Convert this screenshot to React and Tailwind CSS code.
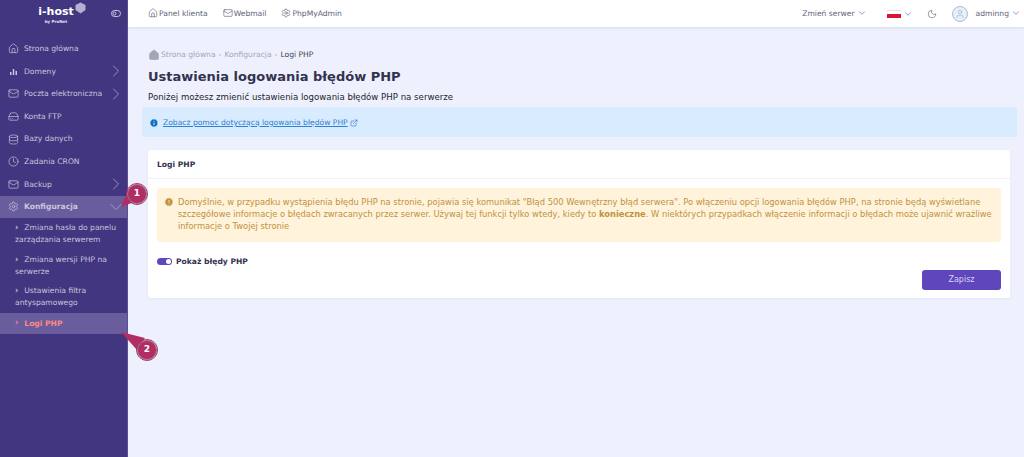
import React from 'react'
import { Home, Mail, HardDrive, Database, Clock, Settings, ChevronRight, ChevronDown, Moon, User, ExternalLink, Info, AlertCircle } from 'lucide-react'

const Bars = ({ className }) => (
  <svg width="11" height="11" viewBox="0 0 11 11" fill="currentColor" className={className}>
    <rect x="2" y="6" width="1.500" height="3" />
    <rect x="4.750" y="3" width="1.500" height="6" />
    <rect x="7.500" y="5" width="1.500" height="4" />
  </svg>
)

const menu = [
  { label: 'Strona główna', icon: Home },
  { label: 'Domeny', icon: Bars, arrow: true },
  { label: 'Poczta elektroniczna', icon: Mail, arrow: true },
  { label: 'Konta FTP', icon: HardDrive },
  { label: 'Bazy danych', icon: Database },
  { label: 'Zadania CRON', icon: Clock },
  { label: 'Backup', icon: Mail, arrow: true },
]

const subMenu = [
  { first: 'Zmiana hasła do panelu', second: 'zarządzania serwerem' },
  { first: 'Zmiana wersji PHP na', second: 'serwerze' },
  { first: 'Ustawienia filtra', second: 'antyspamowego' },
]

const Marker = ({ number, className, arrow }) => (
  <div className={`absolute h-[40px] w-[40px] ${className}`}>
    <svg width="60" height="60" viewBox="0 0 60 60" className="absolute left-0 top-0 overflow-visible">
      <polygon points={arrow} fill="#b12d63" />
    </svg>
    <div className="absolute left-[20px] top-[20px] flex h-[20px] w-[20px] items-center justify-center rounded-full border border-[#8b8794] bg-[#b12d63] text-[9px] font-bold text-white outline outline-1 outline-[#b12d63]">
      {number}
    </div>
  </div>
)

const Sidebar = () => (
  <aside className="flex w-[128px] shrink-0 flex-col border-r border-[#5c5293] bg-[#423680] text-[#c9c5dc]">
    <div className="relative h-[37.400px] shrink-0">
      <div className="flex justify-center pt-[4px] pr-[3px]">
        <div className="flex flex-col items-center">
          <span className="text-[11px] font-bold leading-[16px] text-white">i-host</span>
          <span className="-mt-[1px] text-[4px] font-bold leading-[5px] text-[#e5e3ef]">by ProNet</span>
        </div>
        <svg width="11" height="12" viewBox="0 0 11 12" className="ml-[1px] -mt-[2px]">
          <path d="M5.500 0.500 10.500 3 10.500 8 5.500 11.500 0.500 8 0.500 3Z" fill="#b5b0d2" />
        </svg>
      </div>
      <svg width="10" height="7" viewBox="0 0 10 7" className="absolute left-[111px] top-[10px]" fill="none" stroke="#c9c5dc">
        <rect x="0.500" y="0.500" width="9" height="6" rx="3" />
        <circle cx="3.500" cy="3.500" r="1.500" />
      </svg>
    </div>
    <nav className="text-[7.600px]">
      {menu.map(item => (
        <div key={item.label} className="flex h-[22.600px] items-center pl-[8px] pr-[1px]">
          <item.icon size={11} strokeWidth={1.5} className="mr-[5px] shrink-0" />
          <span className="flex-1 whitespace-nowrap">{item.label}</span>
          {item.arrow && <ChevronRight size={20} strokeWidth={1} className="text-[#a9a4c8]" />}
        </div>
      ))}
      <div className="flex h-[22.600px] items-center bg-[#6a5d9e] pl-[8px] pr-[1px] font-bold">
        <Settings size={11} strokeWidth={1.5} className="mr-[5px] shrink-0" />
        <span className="flex-1">Konfiguracja</span>
        <ChevronDown size={20} strokeWidth={1} className="text-[#a9a4c8]" />
      </div>
      <div className="pt-[4px]">
        <div className="flex flex-col gap-[7.500px]">
          {subMenu.map(item => (
            <div key={item.first} className="pl-[15px] leading-[12px]">
              <div className="whitespace-nowrap"><span className="text-[8px] font-bold">›</span><span className="ml-[6px]">{item.first}</span></div>
              <div className="whitespace-nowrap">{item.second}</div>
            </div>
          ))}
        </div>
        <div className="mt-[3.600px] flex h-[21px] items-center bg-[#6a5d9e] pl-[15px] font-bold text-[#f98a84]">
          <span className="text-[8px] font-bold">›</span><span className="ml-[6px]">Logi PHP</span>
        </div>
      </div>
    </nav>
  </aside>
)

const Topbar = () => (
  <header className="flex h-[27px] shrink-0 items-center bg-white pl-[20px] pr-[3.500px] text-[7.600px] text-[#5e6278] shadow-[0_1px_3px_rgba(60,60,120,0.12)]">
    <div className="flex items-center gap-[15px]">
      <span className="flex items-center gap-[1px]"><Home size={10} strokeWidth={1.5} />Panel klienta</span>
      <span className="flex items-center gap-[1px]"><Mail size={10} strokeWidth={1.5} />Webmail</span>
      <span className="flex items-center gap-[1px]"><Settings size={10} strokeWidth={1.5} />PhpMyAdmin</span>
    </div>
    <div className="ml-auto flex items-center">
      <span className="flex items-center gap-[2px]">Zmień serwer<ChevronDown size={10} strokeWidth={1.5} /></span>
      <span className="ml-[20px] flex h-[8px] w-[14px] flex-col">
        <span className="h-[4px] border-t border-[#e6e6e6] bg-white" />
        <span className="h-[4px] bg-[#dc143c]" />
      </span>
      <ChevronDown size={10} strokeWidth={1.5} className="ml-[2px]" />
      <Moon size={10} strokeWidth={1.5} className="ml-[14px]" />
      <span className="ml-[15px] flex h-[16px] w-[16px] items-center justify-center rounded-full border border-[#a9bfd6] bg-[#e8f0f7]">
        <User size={10} strokeWidth={1.5} className="text-[#8fb0cc]" />
      </span>
      <span className="ml-[8px] flex items-center gap-[1.500px]">adminng<ChevronDown size={10} strokeWidth={1.5} /></span>
    </div>
  </header>
)

const Content = () => (
  <main className="pl-[20px] pr-[14px] pt-[22px]">
    <div className="flex items-center text-[7.600px] leading-[12px] text-[#a1a5b7]">
      <Home size={12} fill="#a1a5b7" strokeWidth={1} className="mr-[1px]" />
      <span>Strona główna</span>
      <span className="mx-[3px] text-[7px]">›</span>
      <span>Konfiguracja</span>
      <span className="mx-[3px] text-[7px]">›</span>
      <span className="text-[#3f4254]">Logi PHP</span>
    </div>
    <h1 className="mt-[5px] text-[13px] font-bold leading-[22px] text-[#33334f]">Ustawienia logowania błędów PHP</h1>
    <p className="mt-[2px] text-[8.600px] leading-[14px] text-[#212529]">Poniżej możesz zmienić ustawienia logowania błędów PHP na serwerze</p>
    <div className="-ml-[6px] -mr-[7px] mt-[3px] flex h-[30px] items-center rounded-[3px] bg-[#d9ebff] pl-[7px] pt-[1px] text-[7.600px]">
      <Info size={10} fill="#0d6fc9" stroke="#ffffff" className="mr-[4px]" />
      <span className="text-[#2f80d0] underline">Zobacz pomoc dotyczącą logowania błędów PHP</span>
      <ExternalLink size={8} className="ml-[2px] text-[#2f80d0]" />
    </div>
    <section className="mt-[13px] h-[148px] rounded-[3px] bg-white shadow-[0_1px_3px_rgba(60,60,120,0.06)]">
      <div className="flex h-[29px] items-center border-b border-[#f1f1f5] pl-[9px] pt-[2px] text-[7.600px] font-bold text-[#33334f]">Logi PHP</div>
      <div className="px-[9px] pt-[9px]">
        <div className="flex h-[54px] rounded-[3px] bg-[#fff3dc] pl-[7px] pt-[7.500px] text-[8.330px] leading-[12.300px] text-[#c0923c]">
          <AlertCircle size={10} fill="#c0923c" stroke="#fff3dc" className="mr-[4px] mt-[1px] shrink-0" />
          <p className="whitespace-nowrap">
            Domyślnie, w przypadku wystąpienia błędu PHP na stronie, pojawia się komunikat "Błąd 500 Wewnętrzny błąd serwera". Po włączeniu opcji logowania błędów PHP, na stronie będą wyświetlane<br />
            szczegółowe informacje o błędach zwracanych przez serwer. Używaj tej funkcji tylko wtedy, kiedy to <b>konieczne</b>. W niektórych przypadkach włączenie informacji o błędach może ujawnić wrażliwe<br />
            informacje o Twojej stronie
          </p>
        </div>
        <div className="mt-[14px] flex h-[10px] items-center pt-[1px]">
          <span className="flex h-[7px] w-[15px] items-center justify-end rounded-full bg-[#5f46bd] pr-[1px]">
            <span className="h-[5px] w-[5px] rounded-full bg-white" />
          </span>
          <span className="ml-[4px] text-[7.600px] font-bold text-[#33334f]">Pokaż błędy PHP</span>
        </div>
        <div className="mt-[4px] flex justify-end">
          <button className="h-[20px] w-[79px] rounded-[3px] bg-[#5f46bd] text-[8px] text-[#d9d3f2]">Zapisz</button>
        </div>
      </div>
    </section>
  </main>
)

export default function App() {
  return (
    <div className="relative flex h-[457px] w-[1024px] overflow-hidden bg-[#eef1fd] font-['DejaVu_Sans',sans-serif]">
      <Sidebar />
      <div className="flex min-w-0 flex-1 flex-col">
        <Topbar />
        <Content />
      </div>
      <Marker number="1" className="left-[107px] top-[164px]" arrow="14,43 21,26 30,37" />
      <Marker number="2" className="left-[117px] top-[320px]" arrow="4,12 28,18 20,30" />
    </div>
  )
}
